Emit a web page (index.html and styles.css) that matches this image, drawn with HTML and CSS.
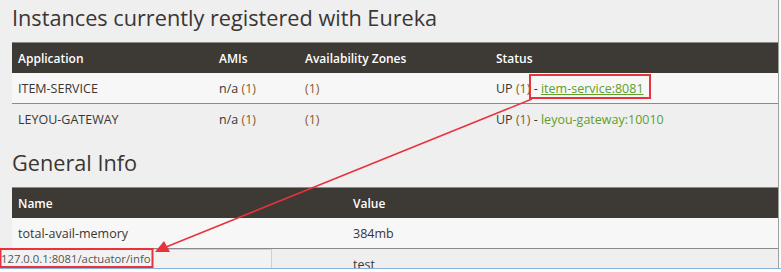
FILE: index.html
```html
<!DOCTYPE html>
<html lang="en">
<head>
    <meta charset="UTF-8">
    <title>Eureka</title>
    <link rel="stylesheet" href="styles.css">
</head>
<body>
    <div class="page">
        <div class="content">
            <h1>Instances currently registered with Eureka</h1>
            <table class="grid apps">
                <thead>
                    <tr><th>Application</th><th>AMIs</th><th>Availability Zones</th><th>Status</th></tr>
                </thead>
                <tbody>
                    <tr class="odd">
                        <td>ITEM-SERVICE</td>
                        <td>n/a <span class="count">(1)</span></td>
                        <td><span class="count">(1)</span></td>
                        <td>UP <span class="count">(1)</span> - <a href="#" class="hovered">item-service:8081</a></td>
                    </tr>
                    <tr>
                        <td>LEYOU-GATEWAY</td>
                        <td>n/a <span class="count">(1)</span></td>
                        <td><span class="count">(1)</span></td>
                        <td>UP <span class="count">(1)</span> - <a href="#">leyou-gateway:10010</a></td>
                    </tr>
                </tbody>
            </table>
            <h1 class="second">General Info</h1>
            <table class="grid info">
                <thead>
                    <tr><th>Name</th><th>Value</th></tr>
                </thead>
                <tbody>
                    <tr class="odd"><td>total-avail-memory</td><td>384mb</td></tr>
                    <!-- name cell is hidden under the status bar -->
                    <tr><td></td><td>test</td></tr>
                </tbody>
            </table>
        </div>
        <div class="scroll-edge"></div>
    </div>
    <!-- browser status bar -->
    <div class="status-bar">
        <span class="status-url">127.0.0.1:8081/actuator/info</span>
    </div>
    <div class="chrome-line"></div>
    <!-- red annotation -->
    <svg class="annotation" width="781" height="272" viewBox="0 0 781 272">
        <rect x="530" y="75" width="120" height="23" fill="none" stroke="#e8323c" stroke-width="2"/>
        <rect x="0.5" y="249" width="152" height="18" fill="none" stroke="#e8323c" stroke-width="2"/>
        <line x1="532" y1="99" x2="166" y2="247" stroke="#e8323c" stroke-width="1.5"/>
        <polygon points="155,252 164,241 170,252" fill="#e8323c"/>
    </svg>
</body>
</html>
```

FILE: styles.css
```css
/* Page */
body {
    margin: 0;
    background: #efefef;
    font-family: "Open Sans", Arial, sans-serif;
    color: #3a3632;
    overflow: hidden;
    height: 272px;
}
.page {
    display: flex;
    height: 272px;
}
.content {
    flex: 1;
    padding: 0 0 0 12px;
}
.scroll-edge {
    width: 2px;
    border-left: 1px solid #a0a0a0;
    background: #fbfbfb;
}
h1 {
    font-weight: 400;
    font-size: 21.7px;
    margin: 3px 0 0 0;
    height: 39px;
    line-height: 30px;
    color: #3a3632;
}
h1.second {
    margin-top: 14px;
    height: 39px;
}
/* Tables */
.grid {
    width: 766px;
    border-collapse: collapse;
    font-size: 12.5px;
}
.grid th {
    background: #3d3934;
    color: #fff;
    text-align: left;
    font-size: 12px;
    font-weight: 600;
    height: 30px;
    padding: 0 6px;
    border-top: 1px solid #8a8a8a;
}
.grid td {
    height: 30px;
    padding: 0 6px;
}
.grid tr.odd td {
    background: #f7f7f7;
    border-bottom: 1px solid #8a8a8a;
}
.apps th:nth-child(1) { width: 189px; }
.apps th:nth-child(2) { width: 74px; }
.apps th:nth-child(3) { width: 179px; }
.info th:nth-child(1) { width: 323px; }
.count {
    color: #8c5a26;
}
a {
    color: #5f9e28;
    text-decoration: none;
}
a.hovered {
    text-decoration: underline;
}
/* Browser chrome overlays */
.status-bar {
    position: absolute;
    left: 0;
    top: 249px;
    width: 271px;
    height: 18px;
    background: #f2f2f2;
    border-right: 1px solid #d0d0d0;
    border-top: 1px solid #d0d0d0;
    font-family: "Open Sans", sans-serif;
    font-size: 11.3px;
    line-height: 18px;
    color: #555;
}
.status-url {
    padding-left: 1px;
}
.chrome-line {
    position: absolute;
    left: 0;
    top: 268px;
    width: 781px;
    height: 3px;
    border-top: 1px solid #86b3dc;
    background: #fff;
}
.annotation {
    position: absolute;
    left: 0;
    top: 0;
}
```
